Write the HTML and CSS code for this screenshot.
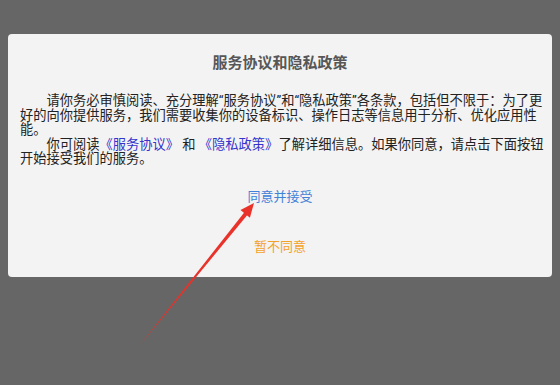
FILE: index.html
```html
<!DOCTYPE html>
<html lang="zh-CN">
<head>
<meta charset="utf-8">
<link rel="stylesheet" href="styles.css">
</head>
<body>
<div class="screen">
  <div class="dialog">
    <h1 class="title">服务协议和隐私政策</h1>
    <div class="content">
      <p class="para">请你务必审慎阅读、充分理解“服务协议”和“隐私政策”各条款，包括但不限于：为了更<br>好的向你提供服务，我们需要收集你的设备标识、操作日志等信息用于分析、优化应用性<br>能。</p>
      <p class="para">你可阅读<span class="link">《服务协议》</span> 和 <span class="link">《隐私政策》</span>了解详细信息。如果你同意，请点击下面按钮<br>开始接受我们的服务。</p>
    </div>
    <div class="actions">
      <div class="btn btn-agree">同意并接受</div>
      <div class="btn btn-deny">暂不同意</div>
    </div>
  </div>
  <svg class="arrow" width="560" height="385" viewBox="0 0 560 385">
    <polygon points="140,345 246.4,209.7 249.6,212.3" fill="#e8322a"/>
    <polygon points="254,203 240.5,210.1 249.9,217.7" fill="#e8322a"/>
  </svg>
</div>
</body>
</html>
```

FILE: styles.css
```css
html, body {
  margin: 0;
  padding: 0;
  background: #666666;
}
.screen {
  position: relative;
  width: 560px;
  height: 385px;
  overflow: hidden;
  padding-top: 34px;
  box-sizing: border-box;
  font-family: Roboto, "Noto Sans CJK SC", sans-serif;
}
.dialog {
  margin-left: 8px;
  width: 544px;
  height: 243px;
  box-sizing: border-box;
  background: #f3f3f3;
  border-radius: 4px;
  padding: 19px 12px 0;
  display: flex;
  flex-direction: column;
}
.title {
  margin: 0;
  font-size: 15px;
  line-height: 20px;
  font-weight: bold;
  color: #575757;
  text-align: center;
}
.content {
  margin-top: 21px;
  font-size: 13.25px;
  line-height: 14.5px;
  color: #222222;
  white-space: nowrap;
}
.para {
  margin: 0;
  text-indent: 2em;
}
.link {
  color: #3434cc;
}
.actions {
  margin-top: 5px;
  display: flex;
  flex-direction: column;
}
.btn {
  height: 50px;
  line-height: 50px;
  text-align: center;
  font-size: 13px;
}
.btn-agree {
  color: #3f82d8;
}
.btn-deny {
  color: #f3a229;
}
.arrow {
  position: absolute;
  left: 0;
  top: 0;
  pointer-events: none;
}
```
